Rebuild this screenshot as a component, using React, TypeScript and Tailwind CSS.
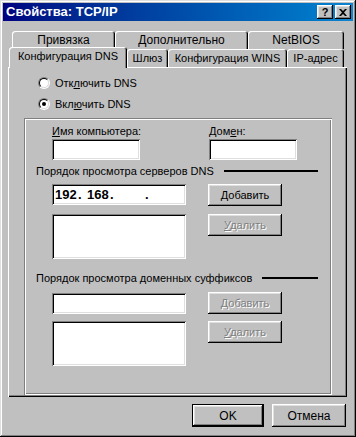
import React from "react";

const raised =
  "bg-[#c0c0c0] shadow-[inset_-1px_-1px_#000,inset_1px_1px_#fff,inset_-2px_-2px_#808080,inset_2px_2px_#dfdfdf]";
const sunken =
  "bg-white shadow-[inset_1px_1px_#808080,inset_-1px_-1px_#fff,inset_2px_2px_#000,inset_-2px_-2px_#dfdfdf]";
const disabled = "text-[#808080] [text-shadow:1px_1px_0_#fff]";

const Radio = ({ checked }: { checked?: boolean }) => (
  <div className="w-[12px] h-[12px] rounded-full border border-t-[#808080] border-l-[#808080] border-r-white border-b-white">
    <div className="w-full h-full rounded-full border border-t-black border-l-black border-r-[#dfdfdf] border-b-[#dfdfdf] bg-white flex items-center justify-center">
      {checked && <div className="w-[4px] h-[4px] rounded-full bg-black" />}
    </div>
  </div>
);

const Tab = ({ label, w, active }: { label: string; w: string; active?: boolean }) => (
  <div
    className={`${w} ${
      active ? "relative z-10 -mt-[2px] h-[21px] pb-[3px]" : "h-[18px]"
    } flex items-center justify-center whitespace-nowrap bg-[#c0c0c0] rounded-t-[3px] shadow-[inset_1px_1px_#fff,inset_-1px_0_#000,inset_-2px_0_#808080]`}
  >
    {label}
  </div>
);

const Btn = ({ children, off }: { children: React.ReactNode; off?: boolean }) => (
  <div className={`${raised} h-[22px] flex items-center justify-center ${off ? disabled : ""}`}>{children}</div>
);

const Header = ({ text }: { text: string }) => (
  <div className="h-[14px] flex items-center pl-[12px] mr-[14px]">
    <span className="whitespace-nowrap">{text}</span>
    <div className="flex-1 h-[2px] bg-black ml-[10px]" />
  </div>
);

export default function App() {
  return (
    <div className="w-[356px] h-[437px] bg-[#c0c0c0] flex flex-col text-[11px] leading-[14px] text-black font-['Liberation_Sans',Arial,sans-serif] shadow-[inset_-1px_-1px_#000,inset_1px_1px_#dfdfdf,inset_-2px_-2px_#808080,inset_2px_2px_#fff]">
      {/* Title bar */}
      <div className="mx-[3px] mt-[3px] h-[18px] bg-gradient-to-r from-[#000080] to-[#1084d0] flex items-center justify-between pl-[3px] pr-[2px]">
        <span className="text-white font-bold text-[13px]">Свойства: TCP/IP</span>
        <div className="flex gap-[2px]">
          <div className={`${raised} w-[16px] h-[14px] flex items-center justify-center font-bold text-[11px] leading-none`}>?</div>
          <div className={`${raised} w-[16px] h-[14px] flex items-center justify-center`}>
            <svg width="8" height="7" viewBox="0 0 8 7">
              <path d="M0 0h2l2 2 2-2h2L5 3.5 8 7H6L4 5 2 7H0l3-3.5z" fill="#000" />
            </svg>
          </div>
        </div>
      </div>

      {/* Tabs */}
      <div className="flex ml-[12px] mt-[10px] text-[12px]">
        <Tab label="Привязка" w="w-[103px]" />
        <Tab label="Дополнительно" w="w-[133px]" />
        <Tab label="NetBIOS" w="w-[96px]" />
      </div>
      <div className="flex items-start ml-[9px] h-[18px]">
        <Tab label="Конфигурация DNS" w="w-[118px]" active />
        <Tab label="Шлюз" w="w-[41px]" />
        <Tab label="Конфигурация WINS" w="w-[119px]" />
        <Tab label="IP-адрес" w="w-[57px]" />
      </div>

      {/* Panel */}
      <div className="ml-[8px] w-[339px] h-[330px] flex flex-col shadow-[inset_1px_1px_#fff,inset_-1px_-1px_#000,inset_-2px_-2px_#808080]">
        <div className="ml-[30px] mt-[9px] flex flex-col gap-[7px]">
          <div className="h-[14px] flex items-center gap-[5px]">
            <Radio />
            <span>
              Отк<u>л</u>ючить DNS
            </span>
          </div>
          <div className="h-[14px] flex items-center gap-[5px]">
            <Radio checked />
            <span>
              Вкл<u>ю</u>чить DNS
            </span>
          </div>
        </div>

        <div className="ml-[16px] mr-[15px] mt-[7px] mb-[2px] flex-1 flex flex-col pt-[6px] shadow-[inset_1px_1px_#808080,inset_2px_2px_#fff,inset_-1px_-1px_#fff,inset_-2px_-2px_#808080]">
          <div className="flex ml-[28px] gap-[69px]">
            <div className="w-[88px] flex flex-col gap-[1px]">
              <span className="whitespace-nowrap">
                <u>И</u>мя компьютера:
              </span>
              <div className={`${sunken} h-[21px]`} />
            </div>
            <div className="w-[88px] flex flex-col gap-[1px]">
              <span>
                Дом<u>е</u>н:
              </span>
              <div className={`${sunken} h-[21px]`} />
            </div>
          </div>

          <div className="mt-[4px]">
            <Header text="Порядок просмотра серверов DNS" />
          </div>
          <div className="ml-[28px] mt-[6px] grid grid-cols-[134px_74px] gap-x-[22px] gap-y-[8px] items-start">
            <div className={`${sunken} h-[21px] flex items-center pl-[3px] font-bold text-[13px]`}>
              <span className="w-[23px]">192</span>
              <span className="w-[9px]">.</span>
              <span className="w-[23px]">168</span>
              <span className="w-[9px]">.</span>
              <span className="w-[26px]" />
              <span className="w-[9px]">.</span>
            </div>
            <Btn>
              <span>
                <u>Д</u>обавить
              </span>
            </Btn>
            <div className={`${sunken} h-[45px]`} />
            <Btn off>
              <span>
                <u>У</u>далить
              </span>
            </Btn>
          </div>

          <div className="mt-[12px]">
            <Header text="Порядок просмотра доменных суффиксов" />
          </div>
          <div className="ml-[28px] mt-[7px] grid grid-cols-[134px_74px] gap-x-[22px] gap-y-[7px] items-start">
            <div className={`${sunken} h-[21px] mt-[1px]`} />
            <Btn off>
              <span>
                <u>Д</u>обавить
              </span>
            </Btn>
            <div className={`${sunken} h-[45px]`} />
            <Btn off>
              <span>
                <u>У</u>далить
              </span>
            </Btn>
          </div>
        </div>
      </div>

      {/* Dialog buttons */}
      <div className="flex justify-end gap-[8px] mr-[10px] mt-[7px] text-[12px]">
        <div className="w-[72px] h-[23px] flex items-center justify-center bg-[#c0c0c0] shadow-[inset_0_0_0_1px_#000,inset_-2px_-2px_#000,inset_2px_2px_#fff,inset_-3px_-3px_#808080,inset_3px_3px_#dfdfdf]">
          OK
        </div>
        <div className={`${raised} w-[74px] h-[23px] flex items-center justify-center`}>Отмена</div>
      </div>
    </div>
  );
}
